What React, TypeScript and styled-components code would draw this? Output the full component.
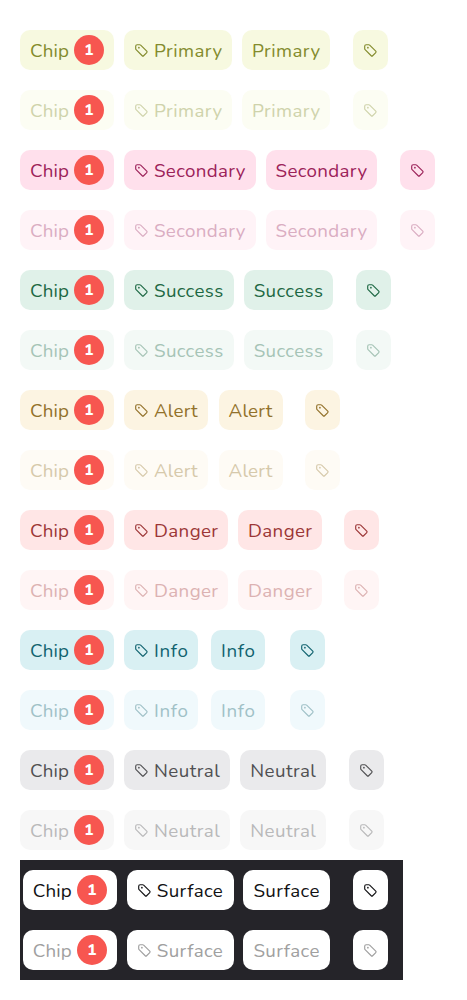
import React from 'react';
import styled, { createGlobalStyle } from 'styled-components';

const GlobalStyle = createGlobalStyle`
  *, *::before, *::after { box-sizing: border-box; }
  body {
    margin: 0;
    background: #fff;
    font-family: Nunito, Lato, 'Open Sans', sans-serif;
  }
`;

interface Tone {
  label: string;
  background: string;
  color: string;
  mutedBackground: string;
  mutedColor: string;
  labelWidth: number;
  spacing: number;
  gap?: number;
  iconGap?: number;
}

const tones: Tone[] = [
  { label: 'Primary', background: '#f7f9e0', color: '#838b2c', mutedBackground: '#fcfdf3', mutedColor: '#cfd3ab', labelWidth: 68, spacing: 0.42 },
  { label: 'Secondary', background: '#ffe0ec', color: '#9c2259', mutedBackground: '#fff3f7', mutedColor: '#daadc2', labelWidth: 91.6, spacing: 0.33 },
  { label: 'Success', background: '#e0f1e9', color: '#1d6843', mutedBackground: '#f3f9f6', mutedColor: '#a6c4b6', labelWidth: 69.7, spacing: 0.36 },
  { label: 'Alert', background: '#fcf4e2', color: '#92712a', mutedBackground: '#fefbf5', mutedColor: '#d6c9ab', labelWidth: 44.4, spacing: 0.2, gap: 10.2, iconGap: 22.4 },
  { label: 'Danger', background: '#ffe6e6', color: '#9c3636', mutedBackground: '#fff5f5', mutedColor: '#dcb2b2', labelWidth: 64, spacing: 0.38, iconGap: 22.4 },
  { label: 'Info', background: '#d9f0f3', color: '#11636f', mutedBackground: '#f0f9fc', mutedColor: '#a0c1c7', labelWidth: 34, spacing: 0.65, gap: 13, iconGap: 25.4 },
  { label: 'Neutral', background: '#eaeaec', color: '#505052', mutedBackground: '#f7f7f7', mutedColor: '#b9b9ba', labelWidth: 66.2, spacing: 0.45 },
];

const surface: Tone = {
  label: 'Surface', background: '#ffffff', color: '#111113', mutedBackground: '#ffffff', mutedColor: '#a0a0a0', labelWidth: 66.8, spacing: 0.36, gap: 9.8, iconGap: 22.4,
};

const Page = styled.main`
  width: 467px;
  height: 1000px;
  padding: 20px 20px 0;
`;

const Row = styled.div`
  display: flex;
  align-items: center;
  height: 60px;
`;

const SurfacePanel = styled.section`
  width: 382.5px;
  padding-left: 2.8px;
  background: #252429;
`;

const Chip = styled.div<{ $bg: string; $fg: string; $before?: number }>`
  display: flex;
  flex: none;
  align-items: center;
  gap: 5px;
  height: 40px;
  margin-left: ${p => p.$before ?? 0}px;
  padding: 0 10px;
  border-radius: 10px;
  background: ${p => p.$bg};
  color: ${p => p.$fg};
`;

const Label = styled.span<{ $width: number; $spacing: number }>`
  width: ${p => p.$width}px;
  padding-top: 2px;
  font-size: 18.75px;
  line-height: 26px;
  letter-spacing: ${p => p.$spacing}px;
  white-space: nowrap;
`;

const Badge = styled.span`
  display: flex;
  align-items: center;
  justify-content: center;
  width: 30px;
  height: 30px;
  border-radius: 50%;
  background: #f75650;
  color: #fff;
  font-size: 15.5px;
  font-weight: 800;
  line-height: 20px;
`;

const Icon = styled.svg`
  display: block;
  flex: none;
  width: 15px;
  height: 15px;
`;

function TagIcon() {
  return (
    <Icon viewBox="0 0 15 15" fill="none" stroke="currentColor" strokeWidth="1.15" strokeLinejoin="round">
      <path d="M1.7 3.2v2.5c0 .36.14.7.4.96l6.1 6.1c.4.4 1.02.4 1.42 0l3.14-3.14c.4-.4.4-1.02 0-1.42l-6.1-6.1a1.36 1.36 0 0 0-.96-.4H3.2c-.83 0-1.5.67-1.5 1.5Z" />
      <circle cx="4.9" cy="4.7" r=".85" fill="currentColor" stroke="none" />
    </Icon>
  );
}

function ChipRow({ tone, muted = false }: { tone: Tone; muted?: boolean }) {
  const colors = {
    $bg: muted ? tone.mutedBackground : tone.background,
    $fg: muted ? tone.mutedColor : tone.color,
  };
  return (
    <Row>
      <Chip {...colors}>
        <Label $width={39} $spacing={0.1}>Chip</Label>
        <Badge>1</Badge>
      </Chip>
      <Chip {...colors} $before={10}>
        <TagIcon />
        <Label $width={tone.labelWidth} $spacing={tone.spacing}>{tone.label}</Label>
      </Chip>
      <Chip {...colors} $before={tone.gap ?? 10}>
        <Label $width={tone.labelWidth} $spacing={tone.spacing}>{tone.label}</Label>
      </Chip>
      <Chip {...colors} $before={tone.iconGap ?? 22.7}>
        <TagIcon />
      </Chip>
    </Row>
  );
}

export default function App() {
  return (
    <>
      <GlobalStyle />
      <Page>
        {tones.map(tone => (
          <React.Fragment key={tone.label}>
            <ChipRow tone={tone} />
            <ChipRow tone={tone} muted />
          </React.Fragment>
        ))}
        <SurfacePanel>
          <ChipRow tone={surface} />
          <ChipRow tone={surface} muted />
        </SurfacePanel>
      </Page>
    </>
  );
}
